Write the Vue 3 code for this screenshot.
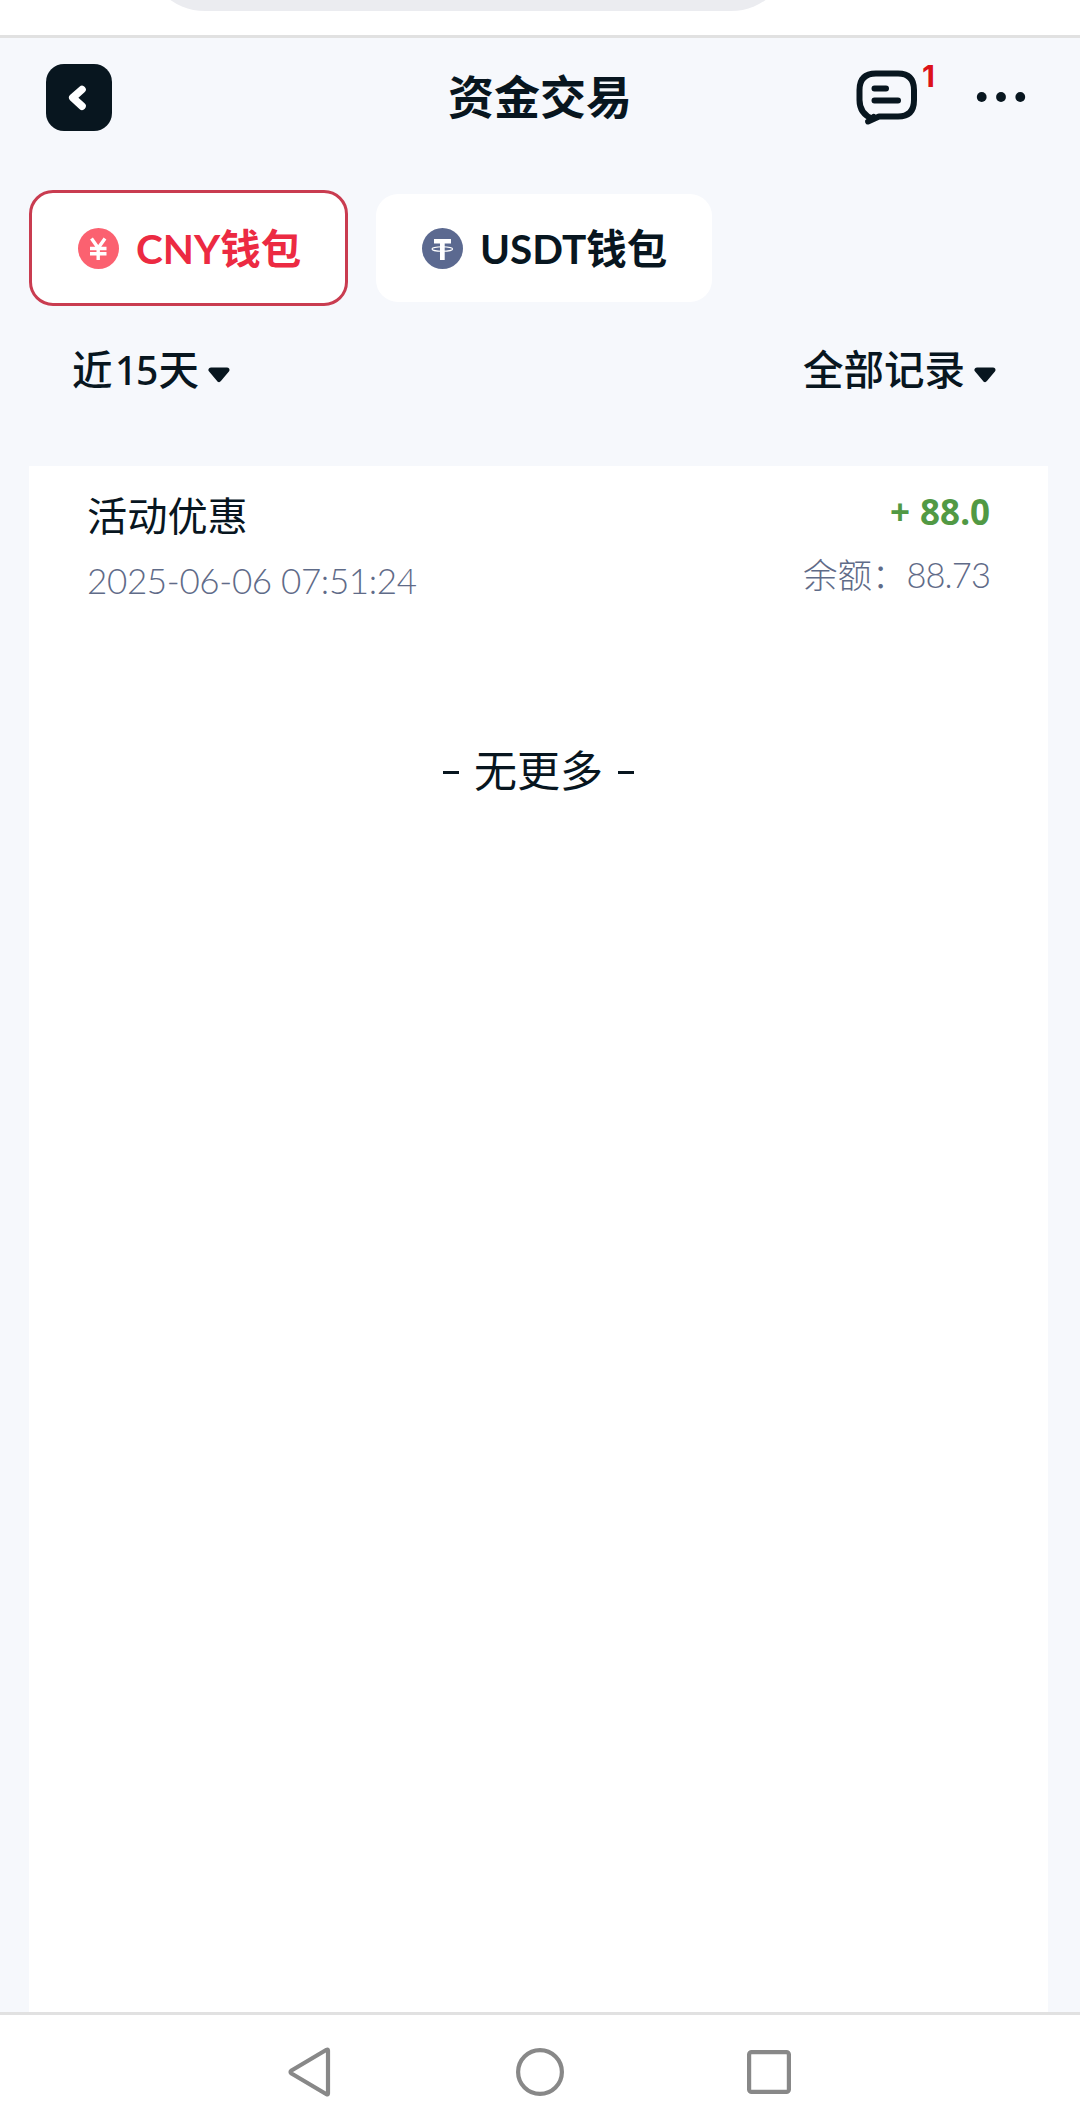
<script setup>
const wallets = [
  { id: 'cny', code: 'CNY', suffix: '钱包', active: true },
  { id: 'usdt', code: 'USDT', suffix: '钱包', active: false },
]
</script>

<template>
  <div class="screen">
    <div class="browser-bar"><div class="address"></div></div>

    <header class="header">
      <button class="back" aria-label="返回">
        <svg width="66" height="66" viewBox="0 0 66 66"><path d="M36 25.500 26.800 33.700 36 42.100" fill="none" stroke="#fff" stroke-width="7.6" stroke-linecap="round" stroke-linejoin="round" /></svg>
      </button>
      <h1 class="title">资金交易</h1>
      <div class="actions">
        <div class="message">
          <svg width="62" height="56" viewBox="0 0 62 56" fill="none" stroke="#08161f" stroke-width="6" stroke-linecap="round" stroke-linejoin="round">
            <path d="M17 49 Q3.500 44 3.500 30 V20 Q3.500 3.500 20 3.500 H42 Q58 3.500 58 20 V30 Q58 46.500 42 46.500 H23 L12 51.500 L17.500 47" />
            <path d="M18.500 18.500 H30 M18.500 30.500 H42" />
          </svg>
          <span class="badge">1</span>
        </div>
        <svg class="more" width="50" height="12" viewBox="0 0 50 12" fill="#08161f"><circle cx="5.700" cy="6" r="4.900" /><circle cx="25" cy="6" r="4.900" /><circle cx="44.300" cy="6" r="4.900" /></svg>
      </div>
    </header>

    <div class="wallets">
      <div v-for="w in wallets" :key="w.id" class="wallet" :class="[w.id, { active: w.active }]">
        <svg v-if="w.id === 'cny'" class="coin" width="41" height="41" viewBox="0 0 41 41">
          <circle cx="20.500" cy="20.500" r="20.500" fill="#fb6170" />
          <path d="M13.500 10.500 20.200 20 27 10.500 M20.200 20 V32 M12 20.500 H28.500 M12 25.800 H28.500" fill="none" stroke="#fff" stroke-width="3.400" />
        </svg>
        <svg v-else class="coin" width="41" height="41" viewBox="0 0 41 41">
          <circle cx="20.500" cy="20.500" r="20.500" fill="#5b6990" />
          <path d="M12 11 H29 V15.500 H22.700 V32 H18 V15.500 H12 Z" fill="#fff" />
          <ellipse cx="20.300" cy="21" rx="10.300" ry="2.300" fill="none" stroke="#fff" stroke-width="1.100" />
        </svg>
        <span class="label">{{ w.code }}{{ w.suffix }}</span>
      </div>
    </div>

    <div class="filters">
      <div class="filter">
        <span>近<span class="num">15</span>天</span>
        <svg class="caret" width="22" height="16" viewBox="0 0 22 16"><path d="M3 3 H19 L11 12.500 Z" fill="#08161f" stroke="#08161f" stroke-width="5" stroke-linejoin="round" /></svg>
      </div>
      <div class="filter">
        <span>全部记录</span>
        <svg class="caret" width="22" height="16" viewBox="0 0 22 16"><path d="M3 3 H19 L11 12.500 Z" fill="#08161f" stroke="#08161f" stroke-width="5" stroke-linejoin="round" /></svg>
      </div>
    </div>

    <main class="list">
      <div class="record">
        <div class="left">
          <div class="name">活动优惠</div>
          <div class="date">2025-06-06 07:51:24</div>
        </div>
        <div class="right">
          <div class="amount">+ 88.0</div>
          <div class="balance">余额：<span class="value">88.73</span></div>
        </div>
      </div>
      <div class="end"><i></i><span>无更多</span><i></i></div>
    </main>

    <nav class="nav">
      <svg width="48" height="56" viewBox="0 0 48 56"><path d="M41 6.500 V49.500 Q41 51 39.500 50.200 L4.500 29.500 Q2.500 28 4.500 26.500 L39.500 5.800 Q41 5 41 6.500 Z" fill="none" stroke="#888" stroke-width="4.200" stroke-linejoin="round" /></svg>
      <svg width="48" height="48" viewBox="0 0 48 48"><circle cx="24" cy="24" r="21.900" fill="none" stroke="#888" stroke-width="4.200" /></svg>
      <svg class="recent" width="44" height="44" viewBox="0 0 44 44"><rect x="2.100" y="2.100" width="39.800" height="39.800" rx="2.500" fill="none" stroke="#888" stroke-width="4.200" /></svg>
    </nav>
  </div>
</template>

<style>
body { margin: 0; background: #f6f8fc; }
</style>

<style scoped>
* { box-sizing: border-box; }
.screen { width: 1080px; height: 2102px; overflow: hidden; display: flex; flex-direction: column; background: #f6f8fc; color: #08161f; font-family: Lato, "Noto Sans CJK SC", sans-serif; }
.browser-bar { flex: none; height: 37.5px; background: #fff; border-bottom: 3px solid #e1e1e1; overflow: hidden; }
.address { width: 646px; height: 120px; margin: -109.5px 0 0 145px; border-radius: 60px; background: #ebecf0; }
.header { flex: none; height: 152.5px; padding: 26.5px 54px 0 46px; display: grid; grid-template-columns: 300px 1fr 292px; align-items: start; }
.back { width: 66px; height: 66.5px; padding: 0; border: 0; border-radius: 18px; background: #08161f; }
.back svg { display: block; }
.title { margin: 0; height: 66px; line-height: 66px; font-size: 46px; font-weight: 700; text-align: center; }
.actions { display: flex; justify-content: flex-end; height: 66px; }
.message { position: relative; margin: 6px 58px 0 0; }
.message svg { display: block; }
.badge { position: absolute; left: 66px; top: -12px; font: 700 30px/36px Inter, sans-serif; color: #dc1219; }
.more { margin-top: 26.5px; }
.wallets { flex: none; height: 116px; display: flex; align-items: center; padding-left: 29px; gap: 28px; }
.wallet { display: flex; align-items: center; background: #fff; border-radius: 22px; height: 108px; width: 336px; padding-left: 46px; font-size: 40.5px; font-weight: 700; line-height: 50px; }
.wallet.active { height: 116px; width: 319px; border: 3px solid #c93c50; border-radius: 24px; color: #ec2a42; padding-left: 46px; }
.label { padding-top: 2px; }
.coin { flex: none; margin-right: 17px; }
.filters { flex: none; height: 160px; padding: 34px 84px 0 72px; display: flex; justify-content: space-between; font-size: 40.5px; font-weight: 500; line-height: 60px; }
.filter { display: flex; height: 60px; }
.num { margin: 0 1.500px 0 2.500px; font-family: "Noto Sans"; font-size: 39px; letter-spacing: -1.300px; }
.caret { margin: 27px 0 0 9px; }
.list { flex: 1; margin: 0 32px 0 29px; background: #fff; }
.record { height: 220px; padding: 22px 58px 0; display: flex; justify-content: space-between; }
.name { height: 56px; line-height: 56px; font-size: 40.2px; }
.date { margin-top: 14px; line-height: 44px; font-size: 35px; font-weight: 300; letter-spacing: -.35px; color: #5f6b88; }
.right { text-align: right; }
.amount { height: 48px; line-height: 48px; font-size: 35px; font-weight: 700; font-family: "Noto Sans"; word-spacing: 1px; color: #519944; }
.balance { margin-top: 14px; height: 50px; line-height: 50px; font-size: 34.5px; font-weight: 300; color: #5f6b88; }
.value { letter-spacing: -.9px; }
.end { display: flex; justify-content: center; align-items: center; gap: 15px; height: 172px; font-size: 43px; }
.end span { line-height: 60px; margin-bottom: 2px; }
.end i { width: 16px; height: 3px; margin-top: 1px; background: #08161f; }
.nav { flex: none; height: 90px; border-top: 3px solid #e1e1e1; background: #fff; display: grid; grid-template-columns: 48px 48px 44px; align-items: center; padding: 27px 0 0 287px; column-gap: 181px; }
.recent { margin-left: 2px; }
</style>
